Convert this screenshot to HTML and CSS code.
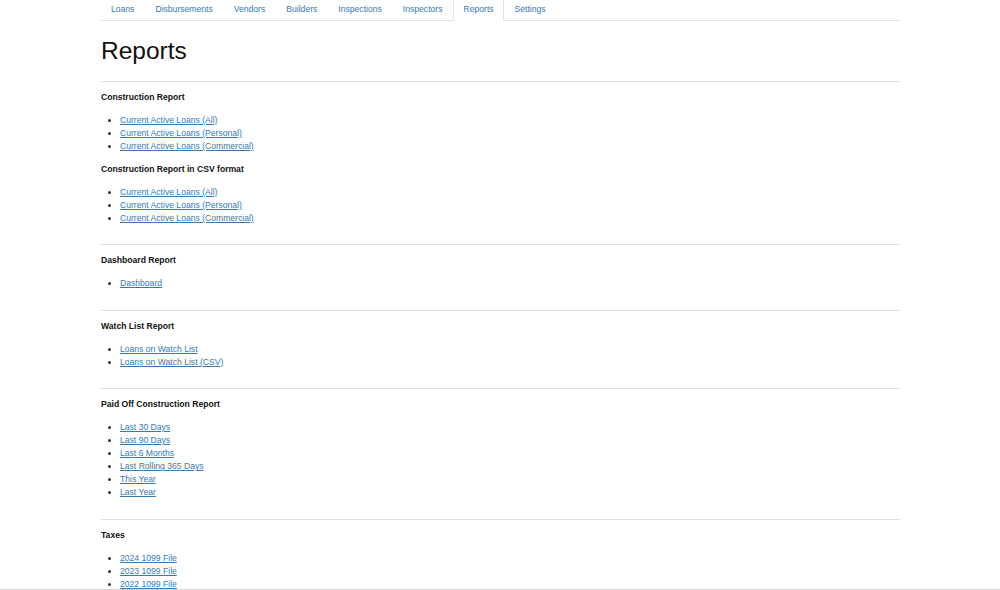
FILE: index.html
```html
<!DOCTYPE html>
<html lang="en">
<head>
    <meta charset="UTF-8">
    <meta name="viewport" content="width=device-width, initial-scale=1.0">
    <title>Reports</title>
    <link rel="stylesheet" href="styles.css">
</head>
<body>
    <div class="container">
        <ul class="nav-tabs">
            <li><a href="#">Loans</a></li>
            <li><a href="#">Disbursements</a></li>
            <li><a href="#">Vendors</a></li>
            <li><a href="#">Builders</a></li>
            <li><a href="#">Inspections</a></li>
            <li><a href="#">Inspectors</a></li>
            <li class="active"><a href="#">Reports</a></li>
            <li><a href="#">Settings</a></li>
        </ul>

        <h1>Reports</h1>

        <div class="section">
            <h5>Construction Report</h5>
            <ul class="links">
                <li><a href="#">Current Active Loans (All)</a></li>
                <li><a href="#">Current Active Loans (Personal)</a></li>
                <li><a href="#">Current Active Loans (Commercial)</a></li>
            </ul>
            <h5>Construction Report in CSV format</h5>
            <ul class="links">
                <li><a href="#">Current Active Loans (All)</a></li>
                <li><a href="#">Current Active Loans (Personal)</a></li>
                <li><a href="#">Current Active Loans (Commercial)</a></li>
            </ul>
        </div>

        <div class="section">
            <h5>Dashboard Report</h5>
            <ul class="links">
                <li><a href="#">Dashboard</a></li>
            </ul>
        </div>

        <div class="section">
            <h5>Watch List Report</h5>
            <ul class="links">
                <li><a href="#">Loans on Watch List</a></li>
                <li><a href="#">Loans on Watch List (CSV)</a></li>
            </ul>
        </div>

        <div class="section">
            <h5>Paid Off Construction Report</h5>
            <ul class="links">
                <li><a href="#">Last 30 Days</a></li>
                <li><a href="#">Last 90 Days</a></li>
                <li><a href="#">Last 6 Months</a></li>
                <li><a href="#">Last Rolling 365 Days</a></li>
                <li><a href="#">This Year</a></li>
                <li><a href="#">Last Year</a></li>
            </ul>
        </div>

        <div class="section">
            <h5>Taxes</h5>
            <ul class="links">
                <li><a href="#">2024 1099 File</a></li>
                <li><a href="#">2023 1099 File</a></li>
                <li><a href="#">2022 1099 File</a></li>
            </ul>
        </div>
    </div>
    <div class="bottom-edge"></div>
</body>
</html>
```

FILE: styles.css
```css
body {
    font-family: "Liberation Sans", Arial, sans-serif;
    font-size: 8.6px;
    line-height: 13px;
    color: #333;
    background-color: #fff;
    margin: 0;
    overflow: hidden;
}

.container {
    margin: 0 100px 0 101px;
}

a {
    color: #337ab7;
}

.nav-tabs {
    display: flex;
    list-style: none;
    margin: -5px 0 0;
    padding: 0;
    border-bottom: 1px solid #e2e2e2;
}

.nav-tabs li {
    margin-right: 1px;
    margin-bottom: -1px;
}

.nav-tabs a {
    display: block;
    padding: 6.5px 9px 4.5px;
    border: 1px solid transparent;
    text-decoration: none;
}

.nav-tabs .active a {
    background-color: #fff;
    border-color: #e2e2e2;
    border-bottom-color: #fff;
}

h1 {
    font-size: 24.5px;
    font-weight: normal;
    line-height: 26px;
    color: #111;
    margin: 17px 0 17px;
}

.section {
    border-top: 1px solid #e0e0e0;
    padding-bottom: 9.4px;
}

h5 {
    font-size: 8.6px;
    line-height: 13px;
    font-weight: bold;
    color: #111;
    margin: 9px 0 10px;
}

.links {
    margin: 0 0 10px;
    padding-left: 19px;
}

.bottom-edge {
    position: fixed;
    left: 0;
    right: 0;
    bottom: 0;
    height: 1px;
    background-color: #d6d6d6;
}
```
